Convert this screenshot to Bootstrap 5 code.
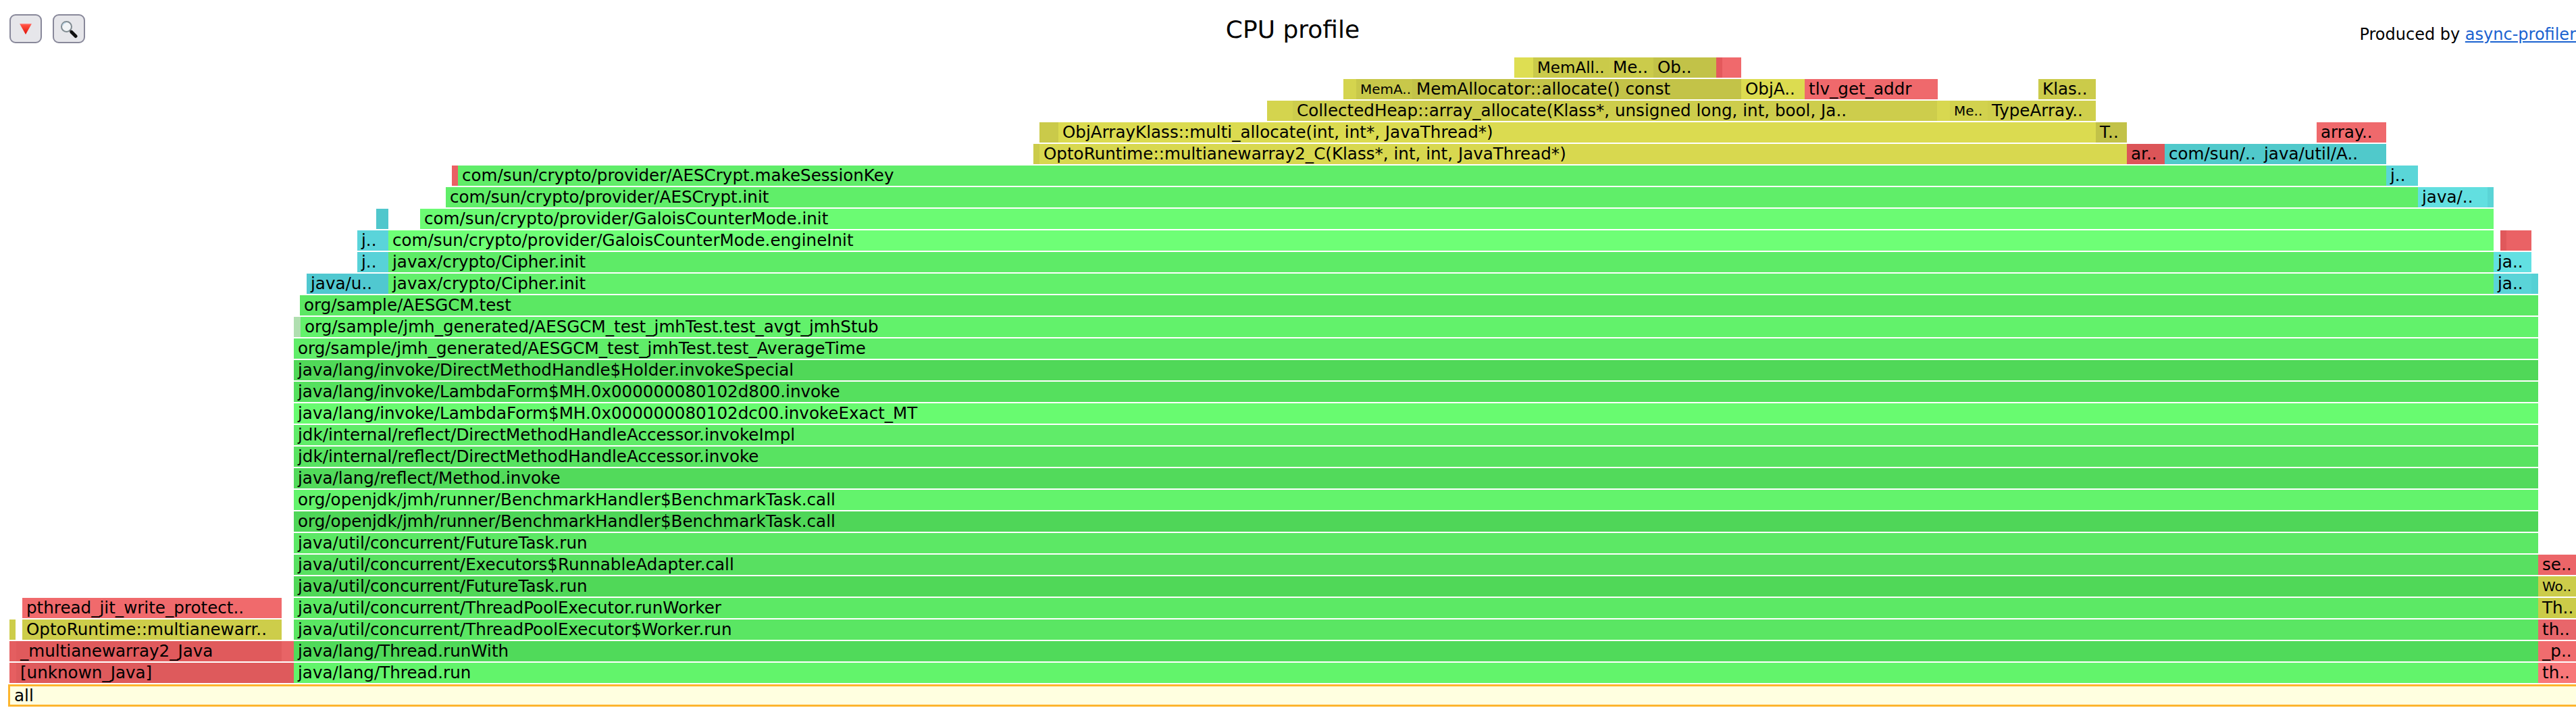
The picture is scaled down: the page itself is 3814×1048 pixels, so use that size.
<!DOCTYPE html>
<html lang="en">
<head>
<meta charset="utf-8">
<title>CPU profile</title>
<link href="https://cdn.jsdelivr.net/npm/bootstrap@5.3.0/dist/css/bootstrap.min.css" rel="stylesheet">
<style>
html,body{height:100%;overflow:hidden;background:#fff;}
body{font-family:"DejaVu Sans",sans-serif;color:#000;}
.fg-head{height:85px;padding-left:14px;display:grid;grid-template-columns:1fr auto 1fr;}
.tool-btn{width:48px;height:43px;padding:0;margin-top:21px;background:#e6e6ea;border:2px solid #88889a;border-radius:9px;display:flex;align-items:center;justify-content:center;}
.tool-btn:hover{background:#e6e6ea;border-color:#88889a;}
.fg-title{font-size:36px;font-weight:400;line-height:1;margin:0;padding-top:26px;}
.fg-by{font-size:24px;line-height:1;padding-top:39px;text-align:right;white-space:nowrap;}
.fg-by a{color:#1a62d0;}
.fg-stack{display:flex;flex-direction:column;gap:2px;}
.fg-row{position:relative;height:30px;}
.frm{position:absolute;top:0;height:30px;line-height:30px;font-size:24.6px;padding-left:6px;white-space:nowrap;overflow:hidden;color:#000;}
.frm-fit{font-size:23px;}
.frm-sm{font-size:20px;}
.frm-all{margin-left:12px;height:33px;line-height:27px;font-size:24.6px;padding-left:6px;background:#ffffe0;border:3px solid #fdb52f;border-right:0;}
</style>
</head>
<body>
<div class="fg-head">
  <div class="d-flex align-items-start gap-3">
    <button class="btn tool-btn" type="button" aria-label="Reverse">
      <svg width="18" height="16" viewBox="0 0 18 16"><defs><linearGradient id="gr" x1="0" y1="0" x2="0" y2="1"><stop offset="0" stop-color="#f88"/><stop offset=".15" stop-color="#ff5040"/><stop offset="1" stop-color="#e01008"/></linearGradient></defs><path d="M0 0H18L9 16Z" fill="url(#gr)"/></svg>
    </button>
    <button class="btn tool-btn" type="button" aria-label="Search">
      <svg width="28" height="28" viewBox="0 0 28 28"><circle cx="10.5" cy="10.5" r="7.5" fill="#f2f4f6" stroke="#7f8a90" stroke-width="2"/><path d="M4.5 9A6 6 0 0 1 10 4.5" fill="none" stroke="#b8d0e0" stroke-width="1.5"/><path d="M15.500 16L17.500 18" stroke="#555" stroke-width="2.500"/><path d="M18 18.500L24 24.500" stroke="#111" stroke-width="5" stroke-linecap="round"/></svg>
    </button>
  </div>
  <h1 class="fg-title">CPU profile</h1>
  <div class="fg-by">Produced by <a href="#">async-profiler</a></div>
</div>
<div class="fg-stack">
<div class="fg-row">
  <div class="frm" style="left:2242px;width:28px;background:#dede52"></div>
  <div class="frm frm-fit" style="left:2270px;width:112px;background:#caca4a">MemAll..</div>
  <div class="frm" style="left:2382px;width:66px;background:#cbcb4b">Me..</div>
  <div class="frm" style="left:2448px;width:93px;background:#c2c248">Ob..</div>
  <div class="frm" style="left:2541px;width:9px;background:#e4595c"></div>
  <div class="frm" style="left:2550px;width:28px;background:#f0696c"></div>
</div>
<div class="fg-row">
  <div class="frm" style="left:1989px;width:19px;background:#d4d44e"></div>
  <div class="frm frm-sm" style="left:2008px;width:83px;background:#c8c84a">MemA..</div>
  <div class="frm" style="left:2091px;width:487px;background:#c3c348">MemAllocator::allocate() const</div>
  <div class="frm" style="left:2578px;width:94px;background:#dcdc50">ObjA..</div>
  <div class="frm" style="left:2672px;width:197px;background:#ef696c">tlv_get_addr</div>
  <div class="frm" style="left:3018px;width:85px;background:#cbcb4a">Klas..</div>
</div>
<div class="fg-row">
  <div class="frm" style="left:1876px;width:38px;background:#d4d44e"></div>
  <div class="frm" style="left:1914px;width:954px;background:#cdcd4c">CollectedHeap::array_allocate(Klass*, unsigned long, int, bool, Ja..</div>
  <div class="frm" style="left:2868px;width:19px;background:#d8d850"></div>
  <div class="frm frm-sm" style="left:2887px;width:56px;background:#d2d24e">Me..</div>
  <div class="frm" style="left:2943px;width:160px;background:#cfcf4c">TypeArray..</div>
</div>
<div class="fg-row">
  <div class="frm" style="left:1539px;width:28px;background:#caca4a"></div>
  <div class="frm" style="left:1567px;width:1536px;background:#dbdb50">ObjArrayKlass::multi_allocate(int, int*, JavaThread*)</div>
  <div class="frm" style="left:3103px;width:46px;background:#c2c248">T..</div>
  <div class="frm" style="left:3430px;width:103px;background:#ef696c">array..</div>
</div>
<div class="fg-row">
  <div class="frm" style="left:1530px;width:9px;background:#cbcb4a"></div>
  <div class="frm" style="left:1539px;width:1610px;background:#d8d84f">OptoRuntime::multianewarray2_C(Klass*, int, int, JavaThread*)</div>
  <div class="frm" style="left:3149px;width:56px;background:#dc5558">ar..</div>
  <div class="frm" style="left:3205px;width:141px;background:#50c9cb">com/sun/..</div>
  <div class="frm" style="left:3346px;width:187px;background:#50c9cb">java/util/A..</div>
</div>
<div class="fg-row">
  <div class="frm" style="left:669px;width:9px;background:#ea6064"></div>
  <div class="frm" style="left:678px;width:2855px;background:#60ed69">com/sun/crypto/provider/AESCrypt.makeSessionKey</div>
  <div class="frm" style="left:3533px;width:47px;background:#5ad6d8">j..</div>
</div>
<div class="fg-row">
  <div class="frm" style="left:660px;width:2920px;background:#60ee69">com/sun/crypto/provider/AESCrypt.init</div>
  <div class="frm" style="left:3580px;width:103px;background:#62dfe0">java/..</div>
  <div class="frm" style="left:3683px;width:9px;background:#5ad4d6"></div>
</div>
<div class="fg-row">
  <div class="frm" style="left:557px;width:18px;background:#50c7cc"></div>
  <div class="frm" style="left:622px;width:3070px;background:#6bfb73">com/sun/crypto/provider/GaloisCounterMode.init</div>
</div>
<div class="fg-row">
  <div class="frm" style="left:529px;width:46px;background:#5ad4da">j..</div>
  <div class="frm" style="left:575px;width:3117px;background:#6eff76">com/sun/crypto/provider/GaloisCounterMode.engineInit</div>
  <div class="frm" style="left:3702px;width:9px;background:#e0585b"></div>
  <div class="frm" style="left:3711px;width:37px;background:#ea6265"></div>
</div>
<div class="fg-row">
  <div class="frm" style="left:529px;width:46px;background:#58d2d8">j..</div>
  <div class="frm" style="left:575px;width:3117px;background:#5eeb67">javax/crypto/Cipher.init</div>
  <div class="frm" style="left:3692px;width:56px;background:#62e0e2">ja..</div>
</div>
<div class="fg-row">
  <div class="frm" style="left:454px;width:121px;background:#50c8d0">java/u..</div>
  <div class="frm" style="left:575px;width:3117px;background:#62f06b">javax/crypto/Cipher.init</div>
  <div class="frm" style="left:3692px;width:56px;background:#5ad4d8">ja..</div>
  <div class="frm" style="left:3748px;width:10px;background:#55d0d4"></div>
</div>
<div class="fg-row">
  <div class="frm" style="left:444px;width:3314px;background:#5be863">org/sample/AESGCM.test</div>
</div>
<div class="fg-row">
  <div class="frm" style="left:435px;width:10px;background:#b0dfb0"></div>
  <div class="frm" style="left:445px;width:3313px;background:#62f26b">org/sample/jmh_generated/AESGCM_test_jmhTest.test_avgt_jmhStub</div>
</div>
<div class="fg-row"><div class="frm" style="left:435px;width:3323px;background:#60ed69">org/sample/jmh_generated/AESGCM_test_jmhTest.test_AverageTime</div></div>
<div class="fg-row"><div class="frm" style="left:435px;width:3323px;background:#50d858">java/lang/invoke/DirectMethodHandle$Holder.invokeSpecial</div></div>
<div class="fg-row"><div class="frm" style="left:435px;width:3323px;background:#55e05e">java/lang/invoke/LambdaForm$MH.0x000000080102d800.invoke</div></div>
<div class="fg-row"><div class="frm" style="left:435px;width:3323px;background:#68fb70">java/lang/invoke/LambdaForm$MH.0x000000080102dc00.invokeExact_MT</div></div>
<div class="fg-row"><div class="frm" style="left:435px;width:3323px;background:#60ec69">jdk/internal/reflect/DirectMethodHandleAccessor.invokeImpl</div></div>
<div class="fg-row"><div class="frm" style="left:435px;width:3323px;background:#58e361">jdk/internal/reflect/DirectMethodHandleAccessor.invoke</div></div>
<div class="fg-row"><div class="frm" style="left:435px;width:3323px;background:#52da5b">java/lang/reflect/Method.invoke</div></div>
<div class="fg-row"><div class="frm" style="left:435px;width:3323px;background:#63f36c">org/openjdk/jmh/runner/BenchmarkHandler$BenchmarkTask.call</div></div>
<div class="fg-row"><div class="frm" style="left:435px;width:3323px;background:#4fd658">org/openjdk/jmh/runner/BenchmarkHandler$BenchmarkTask.call</div></div>
<div class="fg-row"><div class="frm" style="left:435px;width:3323px;background:#5ce865">java/util/concurrent/FutureTask.run</div></div>
<div class="fg-row">
  <div class="frm" style="left:435px;width:3323px;background:#58e061">java/util/concurrent/Executors$RunnableAdapter.call</div>
  <div class="frm" style="left:3758px;width:56px;background:#ec6568">se..</div>
</div>
<div class="fg-row">
  <div class="frm" style="left:435px;width:3323px;background:#50d858">java/util/concurrent/FutureTask.run</div>
  <div class="frm frm-sm" style="left:3758px;width:56px;background:#cccc4a">Wo..</div>
</div>
<div class="fg-row">
  <div class="frm" style="left:33px;width:384px;background:#f06a6c">pthread_jit_write_protect..</div>
  <div class="frm" style="left:435px;width:3323px;background:#5ce965">java/util/concurrent/ThreadPoolExecutor.runWorker</div>
  <div class="frm" style="left:3758px;width:56px;background:#cbcb48">Th..</div>
</div>
<div class="fg-row">
  <div class="frm" style="left:14px;width:9px;background:#cdcd4a"></div>
  <div class="frm" style="left:33px;width:384px;background:#cdcd4a">OptoRuntime::multianewarr..</div>
  <div class="frm" style="left:435px;width:3323px;background:#5ae663">java/util/concurrent/ThreadPoolExecutor$Worker.run</div>
  <div class="frm" style="left:3758px;width:56px;background:#e8666a">th..</div>
</div>
<div class="fg-row">
  <div class="frm" style="left:14px;width:10px;background:#e45e60"></div>
  <div class="frm" style="left:24px;width:393px;background:#e05a5c">_multianewarray2_Java</div>
  <div class="frm" style="left:417px;width:18px;background:#e86466"></div>
  <div class="frm" style="left:435px;width:3323px;background:#50da5a">java/lang/Thread.runWith</div>
  <div class="frm" style="left:3758px;width:56px;background:#f06c6e">_p..</div>
</div>
<div class="fg-row">
  <div class="frm" style="left:14px;width:10px;background:#e65f61"></div>
  <div class="frm" style="left:24px;width:411px;background:#de5a5c">[unknown_Java]</div>
  <div class="frm" style="left:435px;width:3323px;background:#62f46b">java/lang/Thread.run</div>
  <div class="frm" style="left:3758px;width:56px;background:#f87779">th..</div>
</div>
<div class="frm-all">all</div>
</div>
</body>
</html>
